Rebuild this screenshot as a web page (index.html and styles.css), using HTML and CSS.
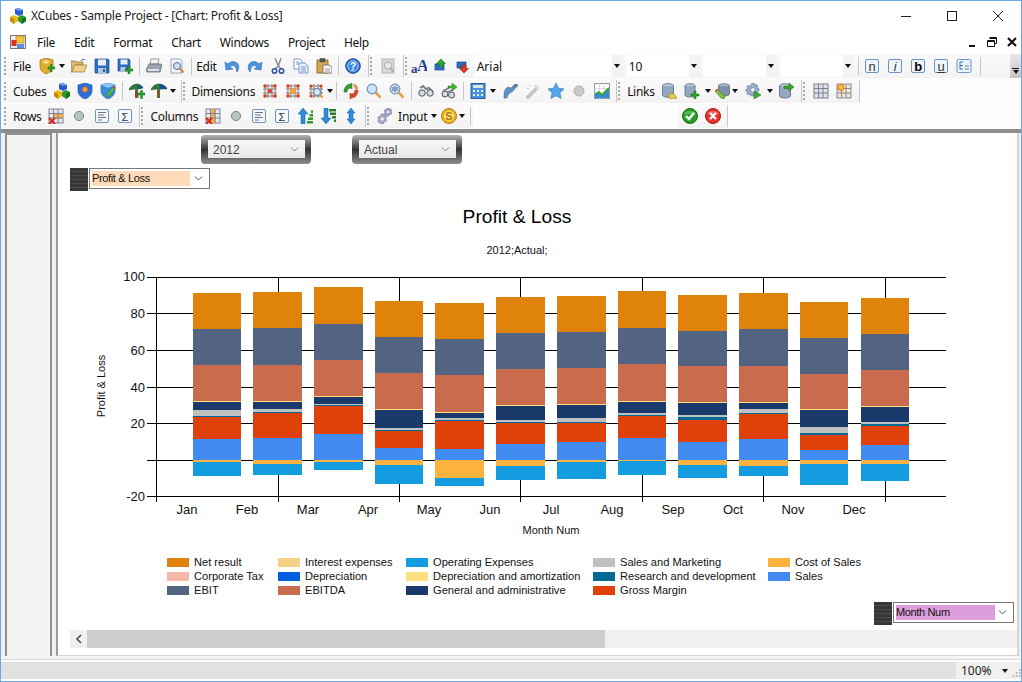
FILE: index.html
```html
<!DOCTYPE html>
<html lang="en">
<head>
<meta charset="utf-8">
<title>XCubes - Sample Project - [Chart: Profit &amp; Loss]</title>
<link rel="stylesheet" href="styles.css">
</head>
<body>
<svg class="defs" width="0" height="0" aria-hidden="true">
<defs>
<symbol id="i-cubes" viewBox="0 0 16 16"><path d="M5 1l4-1 4 2v4l-4 2-4-2z" fill="#2a5cc8"/><path d="M5 1l4 2 4-1-4-2z" fill="#6fa0f0"/><path d="M0 9l4-2 4 2v4l-4 3-4-3z" fill="#e8b818"/><path d="M4 11v5l-4-3V9z" fill="#c08a10"/><path d="M8 9l4-2 4 2v4l-4 3-4-3z" fill="#2f9a2a"/><path d="M12 11v5l4-3V9z" fill="#17701a"/></symbol>
<symbol id="i-doc" viewBox="0 0 16 16"><rect x=".5" y="1.5" width="15" height="13" fill="#eee" stroke="#777"/><rect x="6" y="2" width="8" height="7" fill="#f5c242" stroke="#b08820" stroke-width=".6"/><rect x="1.500" y="6" width="5" height="6" fill="#d9342b"/><rect x="7" y="10" width="7" height="4" fill="#5a8fe0"/></symbol>
<symbol id="i-new" viewBox="0 0 16 16"><path d="M1 2l6-2 7 2v6c0 4-4 7-7 8-3-1-6-4-6-8z" fill="#e0ad2e" stroke="#96701c" stroke-width=".7"/><path d="M3 4l4-2 4 2-4 2z" fill="#f7e08a"/><path d="M9 9h2.500V6.500H13V9h3v2h-3v3h-1.500v-3H9z" fill="#2da52d" stroke="#126612" stroke-width=".5"/></symbol>
<symbol id="i-open" viewBox="0 0 16 16"><path d="M0 3h5l1 1h6v3H4L1 14H0z" fill="#d9b870" stroke="#8f7336" stroke-width=".7"/><path d="M3.500 7H16l-3 7H1z" fill="#f2cf88" stroke="#8f7336" stroke-width=".7"/><path d="M10 3c1-2 3-2 4-1" fill="none" stroke="#4a76c0"/></symbol>
<symbol id="i-save" viewBox="0 0 16 16"><path d="M1 1h13l1 1v13H1z" fill="#2d6cc4" stroke="#1c4a90" stroke-width=".7"/><rect x="4" y="1.500" width="8" height="6" fill="#e6eef8"/><rect x="4" y="10" width="8" height="5" fill="#b8c8dc"/><rect x="9" y="11" width="2" height="3" fill="#2d5a9c"/></symbol>
<symbol id="i-saveas" viewBox="0 0 16 16"><path d="M1 1h11l1 1v11H1z" fill="#2d6cc4" stroke="#1c4a90" stroke-width=".7"/><rect x="3.500" y="1.500" width="7" height="5" fill="#e6eef8"/><rect x="3.500" y="9" width="5" height="4" fill="#b8c8dc"/><path d="M8 11h3V8h2v3h3v2h-3v3h-2v-3H8z" fill="#2da52d" stroke="#126612" stroke-width=".5"/></symbol>
<symbol id="i-print" viewBox="0 0 16 16"><path d="M5 1h8l-1 5H4z" fill="#f4f4f4" stroke="#777" stroke-width=".7"/><path d="M3 6h12l1 1-2 7H1L0 12z" fill="#9aa4ae" stroke="#59626c" stroke-width=".7"/><rect x="2" y="11" width="11" height="2" fill="#dfe3e7"/></symbol>
<symbol id="i-preview" viewBox="0 0 16 16"><path d="M2 1h9l2 2v12H2z" fill="#f4f7fb" stroke="#7d8fa6" stroke-width=".8"/><circle cx="8" cy="8" r="3.500" fill="#cfe2f6" stroke="#4a6a92"/><path d="M10.500 10.500l4 4" stroke="#d97a3a" stroke-width="2"/></symbol>
<symbol id="i-undo" viewBox="0 0 16 16"><path d="M1 4l1 8 7-1-3-2c2-2 5-2 6 1l1 4c3-4 2-9-2-10-3-1-5 0-7 2z" fill="#4b95e0" stroke="#2a67ad" stroke-width=".6"/></symbol>
<symbol id="i-redo" viewBox="0 0 16 16"><path d="M15 4l-1 8-7-1 3-2c-2-2-5-2-6 1l-1 4C0 10 1 5 5 4c3-1 5 0 7 2z" fill="#4b95e0" stroke="#2a67ad" stroke-width=".6"/></symbol>
<symbol id="i-cut" viewBox="0 0 16 16"><path d="M5 0l3.500 8L11 0M8 8l-2.500 3M8.500 8l2.500 3" fill="none" stroke="#8c929a" stroke-width="1.500"/><circle cx="4.500" cy="13" r="2.200" fill="none" stroke="#2a4f98" stroke-width="1.500"/><circle cx="11.500" cy="13" r="2.200" fill="none" stroke="#2a4f98" stroke-width="1.500"/></symbol>
<symbol id="i-copy" viewBox="0 0 16 16"><path d="M1 1h6l2 2v8H1z" fill="#fff" stroke="#5d87bd" stroke-width=".8"/><path d="M6 5h6l3 3v7H6z" fill="#e8f0fa" stroke="#5d87bd" stroke-width=".8"/><path d="M8 9h5M8 11h5M8 13h5M3 4h3M3 6h3" stroke="#5d87bd" stroke-width=".8"/></symbol>
<symbol id="i-paste" viewBox="0 0 16 16"><rect x="1" y="2" width="11" height="13" fill="#d7a850" stroke="#7c5c20" stroke-width=".8"/><rect x="4" y="0.500" width="5" height="3.500" fill="#555" stroke="#333" stroke-width=".4"/><path d="M7 7h6l3 2v6H7z" fill="#f5f5f5" stroke="#666" stroke-width=".8"/><path d="M9 11h5M9 13h5" stroke="#888" stroke-width=".8"/></symbol>
<symbol id="i-help" viewBox="0 0 16 16"><circle cx="8" cy="8" r="7.300" fill="#2f6fd0" stroke="#1f4c96"/><circle cx="8" cy="8" r="5.300" fill="#3f87e6" stroke="#dce9fb" stroke-width=".7"/><text x="8" y="12" text-anchor="middle" class="ico-txt-help">?</text></symbol>
<symbol id="i-grayprev" viewBox="0 0 16 16"><rect x="2" y="1" width="12" height="14" fill="#d8d8d8" stroke="#b8b8b8"/><circle cx="8" cy="7.500" r="3.500" fill="#e8e8e8" stroke="#aaa"/><path d="M10.500 10.500l3 3" stroke="#aaa" stroke-width="2"/></symbol>
<symbol id="i-font" viewBox="0 0 16 16"><text x="0" y="15" class="ico-txt-a">a</text><text x="6" y="13" class="ico-txt-A">A</text></symbol>
<symbol id="i-up" viewBox="0 0 16 16"><rect x="2" y="6" width="9" height="6" fill="#2f6cc8" stroke="#1b4688" stroke-width=".7"/><path d="M8 1l4.500 4.500H10V9H6V5.500H3.500z" fill="#2fa82f" stroke="#126e12" stroke-width=".6"/></symbol>
<symbol id="i-down" viewBox="0 0 16 16"><rect x="2" y="4" width="9" height="6" fill="#2f6cc8" stroke="#1b4688" stroke-width=".7"/><path d="M9 15l-4.500-4.500H7V7h4v3.500h2.500z" fill="#e03a20" stroke="#96200e" stroke-width=".6"/></symbol>
<symbol id="i-shield" viewBox="0 0 16 16"><path d="M1 2l7-2 7 2v6c0 4-4 7-7 8-3-1-7-4-7-8z" fill="#2a70d8" stroke="#1a4c9c" stroke-width=".6"/><circle cx="8" cy="6.500" r="2.800" fill="#f3a53a" stroke="#c9472a" stroke-width=".7"/></symbol>
<symbol id="i-shieldpen" viewBox="0 0 16 16"><path d="M1 2l7-2 7 2v6c0 4-4 7-7 8-3-1-7-4-7-8z" fill="#3c8cdc" stroke="#1f5ea4" stroke-width=".6"/><path d="M1 2l7 3 7-3-7-2z" fill="#8cc4f2"/><path d="M6 14l1-3 6-7 2 2-6 7z" fill="#5cb84a" stroke="#2b6e20" stroke-width=".5"/><path d="M13 4l2 2 1-1-2-2z" fill="#d6443a"/></symbol>
<symbol id="i-umbplus" viewBox="0 0 16 16"><path d="M0 7c1-4 5-6 8-6 2 0 5 1 6 4l-5 1-1 1-3-1z" fill="#2f7a3a" stroke="#134a20" stroke-width=".5"/><path d="M8 2c2 0 5 1 6 3l-5 1z" fill="#1c4e8a"/><path d="M6 7h3l.5 8H6z" fill="#7a5b2c"/><path d="M9 10h2.500V7.500h2V10H16v2h-2.500v3.500h-2V12H9z" fill="#2da52d" stroke="#126612" stroke-width=".5"/></symbol>
<symbol id="i-umb" viewBox="0 0 16 16"><path d="M0 7c1-4 5-6 8-6 3 0 7 2 8 5l-6 0-2 1-3-1z" fill="#2f7a3a" stroke="#134a20" stroke-width=".5"/><path d="M8 1c3 0 7 2 8 5l-7 0z" fill="#1c4e8a"/><path d="M6 7h3v8H6z" fill="#7a5b2c"/></symbol>
<symbol id="i-dim" viewBox="0 0 16 16"><path d="M3 3h10v10H3zM1 6h14M1 10h14M6 1v14M10 1v14" fill="none" stroke="#8a7a7a"/><g fill="#d83a20"><circle cx="3" cy="3" r="1.800"/><circle cx="13" cy="3" r="1.800"/><circle cx="3" cy="13" r="1.800"/><circle cx="13" cy="13" r="1.800"/><circle cx="8" cy="8" r="2"/></g></symbol>
<symbol id="i-dim2" viewBox="0 0 16 16"><path d="M3 3h10v10H3zM1 6h14M1 10h14M6 1v14M10 1v14" fill="none" stroke="#8a7a7a"/><g fill="#e0401c"><circle cx="3" cy="3" r="1.800"/><circle cx="13" cy="3" r="1.800"/><circle cx="8" cy="8" r="3" fill="#f0a030"/><circle cx="3" cy="13" r="1.800"/><circle cx="13" cy="13" r="1.800"/></g></symbol>
<symbol id="i-dim3" viewBox="0 0 16 16"><path d="M3 3h10v10H3zM1 6h14M1 10h14M6 1v14M10 1v14" fill="none" stroke="#8a7a7a"/><g fill="#d83a20"><circle cx="3" cy="3" r="1.600"/><circle cx="13" cy="3" r="1.600"/><circle cx="3" cy="13" r="1.600"/></g><circle cx="9" cy="9" r="3.500" fill="#d6e8fa" stroke="#5a7ea6"/><path d="M11.500 11.500l3 3" stroke="#e09040" stroke-width="2"/></symbol>
<symbol id="i-refresh" viewBox="0 0 16 16"><path d="M1 9C1 4 4 1 8 1l1-1v6L8 5C5 5 4 7 4 9z" fill="#35a035" stroke="#176017" stroke-width=".5"/><path d="M15 7c0 5-3 8-7 8l-1 1v-6l1 1c3 0 4-2 4-4z" fill="#dd4a2a" stroke="#8e2410" stroke-width=".5"/><path d="M10 1c3 0 5 2 5 5l-3 0z" fill="#e88a50"/></symbol>
<symbol id="i-find" viewBox="0 0 16 16"><circle cx="6" cy="6" r="4.800" fill="#cfe4fa" stroke="#6f90b8" stroke-width="1.200"/><path d="M9.500 9.500l5 5" stroke="#e0a04c" stroke-width="2.600"/></symbol>
<symbol id="i-find2" viewBox="0 0 16 16"><circle cx="6" cy="6" r="4.800" fill="#cfe4fa" stroke="#6f90b8" stroke-width="1.200"/><path d="M4 4v4M6 3v6M8 4v4" stroke="#4a5e78" stroke-width="1"/><path d="M9.500 9.500l5 5" stroke="#e0a04c" stroke-width="2.600"/></symbol>
<symbol id="i-binoc" viewBox="0 0 16 16"><path d="M2 5l3-2 3 3 3-1 4 4" fill="none" stroke="#7b8088" stroke-width="2"/><circle cx="4" cy="10" r="3.200" fill="#d6dbe0" stroke="#50555c"/><circle cx="12" cy="10" r="3.200" fill="#d6dbe0" stroke="#50555c"/></symbol>
<symbol id="i-binoc2" viewBox="0 0 16 16"><circle cx="4" cy="11" r="3" fill="#d6dbe0" stroke="#50555c"/><circle cx="10.500" cy="12" r="3" fill="#d6dbe0" stroke="#50555c"/><path d="M2 8l6-3M7 9l5-2" stroke="#7b8088" stroke-width="1.800"/><path d="M7 3h4V0l5 4-5 4V5H7z" fill="#46b030" stroke="#1c7010" stroke-width=".5"/></symbol>
<symbol id="i-calc" viewBox="0 0 16 16"><rect x="1" y="0.500" width="14" height="15" fill="#4a90dc" stroke="#28609e"/><rect x="3" y="2" width="10" height="3" fill="#d7ecd8"/><g fill="#e8f2fc"><rect x="3" y="7" width="2" height="2"/><rect x="7" y="7" width="2" height="2"/><rect x="11" y="7" width="2" height="2"/><rect x="3" y="11" width="2" height="2"/><rect x="7" y="11" width="2" height="2"/><rect x="11" y="11" width="2" height="2"/></g></symbol>
<symbol id="i-wrench" viewBox="0 0 16 16"><path d="M2 15c0-5 0-9 4-11l3 1 4-4 3 1-5 6c-2 2-5 2-6 7z" fill="#5c8fc8" stroke="#36608e" stroke-width=".5"/><path d="M12 2l3-1 1 2-3 2z" fill="#70767e"/></symbol>
<symbol id="i-wand" viewBox="0 0 16 16"><path d="M1 14L10 5l2 2-9 9z" fill="#c9c9c9" stroke="#a2a2a2" stroke-width=".6"/><path d="M11 1l1 2 2 0-1 2 1 2-2 0-1-2-2-1z" fill="#dadada"/><path d="M4 2l1 1M2 5l2 1" stroke="#c0c0c0"/></symbol>
<symbol id="i-star" viewBox="0 0 16 16"><path d="M8 0l2.400 5.200 5.600.7-4.100 3.900 1.100 5.700L8 12.700l-5 2.800 1.100-5.700L0 5.900l5.600-.7z" fill="#55a5ea" stroke="#2a6cb0" stroke-width=".6"/></symbol>
<symbol id="i-dot" viewBox="0 0 16 16"><circle cx="8" cy="8" r="5" fill="#c9c9c9" stroke="#b0b0b0"/></symbol>
<symbol id="i-dotg" viewBox="0 0 16 16"><circle cx="8" cy="8" r="4.600" fill="#b9c4c2" stroke="#7a8a88"/></symbol>
<symbol id="i-chart" viewBox="0 0 16 16"><rect x=".5" y=".5" width="15" height="15" fill="#fff" stroke="#8a96a4"/><path d="M0 5.500h16M0 10.500h16M5.500 0v16M10.500 0v16" stroke="#c4ccd4" stroke-width=".7"/><path d="M1 15V11l4-2 3 3 7-7v10z" fill="#3d88d8"/><path d="M1 11l4-2 3 3 7-7" fill="none" stroke="#2ea82e" stroke-width="1.800"/></symbol>
<symbol id="i-dbs" viewBox="0 0 16 16"><ellipse cx="7" cy="3" rx="5.500" ry="2.300" fill="#c4d0e0" stroke="#6a7c92"/><path d="M1.500 3v9c0 1 2.500 2.300 5.500 2.300s5.500-1.300 5.500-2.300V3" fill="#96a8c0" stroke="#6a7c92"/><path d="M7 13l3-3 3 1 3 4-2 1H9z" fill="#e8c84a" stroke="#8f7a20" stroke-width=".6"/></symbol>
<symbol id="i-dbplus" viewBox="0 0 16 16"><ellipse cx="6" cy="3" rx="5" ry="2.200" fill="#c4d0e0" stroke="#6a7c92"/><path d="M1 3v9c0 1 2.300 2 5 2s5-1 5-2V3" fill="#96a8c0" stroke="#6a7c92"/><path d="M7 11h3V8h2v3h3v2h-3v3h-2v-3H7z" fill="#2da52d" stroke="#126612" stroke-width=".5"/></symbol>
<symbol id="i-dbpen" viewBox="0 0 16 16"><ellipse cx="10" cy="3" rx="5.500" ry="2.200" fill="#b4bed0" stroke="#6a7c92"/><path d="M4.500 3v8c0 1 2.500 2 5.500 2s5.500-1 5.500-2V3" fill="#7f90a8" stroke="#6a7c92"/><path d="M1 8l2-2 8 7-1 3-3-1z" fill="#7ec040" stroke="#3e7a14" stroke-width=".6"/><path d="M1 8l2-2 1 1-2 2z" fill="#e04a3a"/></symbol>
<symbol id="i-gear" viewBox="0 0 16 16"><path d="M7 0h2l.5 2 2-.5 1.500 1.500-1 1.800 2 1v2l-2 .7.5 2-1.500 1.500-2-1-.8 2H6l-.7-2-2 1-1.500-1.500 1-2-2-.5V6.500l2-.7-1-2L3.300 2.300l2 1z" fill="#9cb0cc" stroke="#5e7290" stroke-width=".6"/><circle cx="8" cy="7" r="2.500" fill="#e4eaf2" stroke="#5e7290" stroke-width=".6"/><path d="M9 8l7 4-7 4z" fill="#3aa83a" stroke="#1a6a1a" stroke-width=".5"/></symbol>
<symbol id="i-dbout" viewBox="0 0 16 16"><ellipse cx="7" cy="3" rx="5.500" ry="2.200" fill="#c4d0e0" stroke="#6a7c92"/><path d="M1.500 3v10c0 1 2.500 2 5.500 2s5.500-1 5.500-2V3" fill="#96a8c0" stroke="#6a7c92"/><path d="M6 3h5V0l5 4-5 4V5.500H6z" fill="#35a82a" stroke="#1a6a12" stroke-width=".5"/></symbol>
<symbol id="i-grid" viewBox="0 0 16 16"><rect x="1" y="1" width="14" height="14" fill="#dfe1ea" stroke="#7d8090"/><path d="M1 5.500h14M1 10h14M5.500 1v14M10 1v14" stroke="#7d8090"/></symbol>
<symbol id="i-gridsun" viewBox="0 0 16 16"><rect x="1" y="1" width="14" height="14" fill="#f3e4cc" stroke="#8a8a94"/><path d="M1 5.500h14M1 10h14M5.500 1v14M10 1v14" stroke="#8a8a94"/><circle cx="5" cy="4.500" r="3" fill="#f6c32c" stroke="#e2572a" stroke-width=".8"/></symbol>
<symbol id="i-gridx" viewBox="0 0 16 16"><rect x="1" y="1" width="14" height="14" fill="#e8e8ef" stroke="#7d8090"/><rect x="6" y="6" width="9" height="5" fill="#f2b050"/><path d="M1 5.500h14M1 10h14M5.500 1v14M10 1v14" stroke="#7d8090"/><path d="M1 10l6 6M7 10l-6 6" stroke="#d82a18" stroke-width="2"/></symbol>
<symbol id="i-gridx2" viewBox="0 0 16 16"><rect x="1" y="1" width="14" height="14" fill="#e8e8ef" stroke="#7d8090"/><rect x="6" y="1" width="4.500" height="14" fill="#f2b050"/><path d="M1 5.500h14M1 10h14M5.500 1v14M10 1v14" stroke="#7d8090"/><path d="M1 10l6 6M7 10l-6 6" stroke="#d82a18" stroke-width="2"/></symbol>
<symbol id="i-list" viewBox="0 0 16 16"><rect x="1.500" y="1.500" width="13" height="13" rx="1.500" fill="#f5f9fe" stroke="#6f93c4"/><path d="M4 4.500h8M4 7h6M4 9.500h8M4 12h4" stroke="#6a7484"/></symbol>
<symbol id="i-sigma" viewBox="0 0 16 16"><rect x="1.500" y="1.500" width="13" height="13" rx="1.500" fill="#f5f9fe" stroke="#6f93c4"/><text x="8" y="12.500" text-anchor="middle" class="ico-txt-s">Σ</text></symbol>
<symbol id="i-sortup" viewBox="0 0 16 16"><path d="M6 0l5 6H8v10H4V6H1z" fill="#2d8cdc" stroke="#1a5a9c" stroke-width=".5"/><g fill="#2f9a2a"><rect x="10" y="13" width="6" height="2.500"/><rect x="11" y="9.500" width="5" height="2.500"/><rect x="12.500" y="6" width="3.500" height="2.500"/><rect x="14" y="2.500" width="2" height="2.500"/></g></symbol>
<symbol id="i-sortdown" viewBox="0 0 16 16"><path d="M6 16l5-6H8V0H4v10H1z" fill="#2d8cdc" stroke="#1a5a9c" stroke-width=".5"/><g fill="#2f7a2a"><rect x="9" y="1" width="7" height="2.500"/><rect x="10" y="4.500" width="6" height="2.500"/><rect x="12" y="8" width="4" height="2.500"/><rect x="14" y="11.500" width="2" height="2.500"/></g></symbol>
<symbol id="i-updown" viewBox="0 0 16 16"><path d="M8 0l4 5H10v6h2l-4 5-4-5h2V5H4z" fill="#2d8cdc" stroke="#1a5a9c" stroke-width=".5"/></symbol>
<symbol id="i-gears" viewBox="0 0 16 16"><g fill="#a8a4c4" stroke="#6a6690" stroke-width=".5"><path d="M10 0h2l.4 1.500 1.600-.5 1 1.500-1 1.200 1 1.300-1 1.500-1.600-.5L12 8h-2l-.4-1.500L8 7 7 5.500 8 4.200 7 3l1-1.500 1.600.5z"/><path d="M4 6h2.500l.4 1.700 1.700-.5 1.200 2-1.300 1.300 1.300 1.300-1.200 2-1.700-.5L6.500 16H4l-.4-1.700-1.700.5-1.200-2L2 11.500.700 10.200l1.200-2 1.700.5z"/></g><circle cx="11" cy="4" r="1.300" fill="#eee"/><circle cx="5.200" cy="11" r="1.800" fill="#eee"/></symbol>
<symbol id="i-coin" viewBox="0 0 16 16"><circle cx="8" cy="8" r="7.500" fill="#efb41e" stroke="#b07c08"/><circle cx="8" cy="8" r="5" fill="#fbe07a"/><text x="8" y="12" text-anchor="middle" class="ico-txt-c">S</text></symbol>
<symbol id="i-ok" viewBox="0 0 16 16"><circle cx="8" cy="8" r="7.500" fill="#27a027" stroke="#126c12"/><path d="M2 6c2-4 10-4 12 0" fill="#7cd07c" opacity=".6"/><path d="M4 8l3 3 5-6" fill="none" stroke="#fff" stroke-width="2.400"/></symbol>
<symbol id="i-no" viewBox="0 0 16 16"><circle cx="8" cy="8" r="7.500" fill="#e8352a" stroke="#a81810"/><path d="M2 6c2-4 10-4 12 0" fill="#f59088" opacity=".6"/><path d="M5 5l6 6M11 5l-6 6" stroke="#fff" stroke-width="2.400"/></symbol>
<symbol id="i-tree" viewBox="0 0 16 16"><rect x="1" y="1.500" width="14" height="13" rx="1.500" fill="#eaf2fc" stroke="#6f93c4"/><path d="M4 4h3M4 4v7h3M4 7.500h3" fill="none" stroke="#2a7ac8"/><path d="M9 8h4M9 11h4" stroke="#6a7484"/></symbol>
</defs>
</svg>

<div class="window">
  <header class="titlebar">
    <svg class="ico app-ico"><use href="#i-cubes"/></svg>
    <span class="title-text">XCubes - Sample Project - [Chart: Profit &amp; Loss]</span>
    <span class="caps">
      <svg class="cap" viewBox="0 0 46 30"><path d="M18 15.500h10" stroke="#222" fill="none"/></svg>
      <svg class="cap" viewBox="0 0 46 30"><rect x="18.500" y="10.500" width="9" height="9" stroke="#222" fill="none"/></svg>
      <svg class="cap" viewBox="0 0 46 30"><path d="M18 10l10 10M28 10L18 20" stroke="#222" fill="none"/></svg>
    </span>
  </header>

  <nav class="menubar">
    <svg class="ico menu-ico"><use href="#i-doc"/></svg>
    <span class="menu m-first">File</span>
    <span class="menu">Edit</span>
    <span class="menu">Format</span>
    <span class="menu">Chart</span>
    <span class="menu">Windows</span>
    <span class="menu">Project</span>
    <span class="menu">Help</span>
    <span class="mdi">
      <svg class="mdi-ic" viewBox="0 0 12 12"><rect x="3" y="9" width="6" height="2" fill="#111"/></svg>
      <svg class="mdi-ic" viewBox="0 0 12 12"><path d="M3.500 1.500h7v6h-2M1.500 4.500h7v6h-7zM1.500 5.500h7M3.500 2.500h7" fill="none" stroke="#111"/></svg>
      <svg class="mdi-ic" viewBox="0 0 12 12"><path d="M2 2l8 8M10 2l-8 8" stroke="#111" stroke-width="2.200"/></svg>
    </span>
  </nav>

  <div class="tbrow">
    <div class="band">
      <i class="grip"></i><span class="lbl l-pad4">File</span>
      <b class="btn"><svg class="ico"><use href="#i-new"/></svg></b><i class="arr"></i>
      <b class="btn"><svg class="ico"><use href="#i-open"/></svg></b>
      <b class="btn"><svg class="ico"><use href="#i-save"/></svg></b>
      <b class="btn"><svg class="ico"><use href="#i-saveas"/></svg></b><i class="sep"></i>
      <b class="btn"><svg class="ico"><use href="#i-print"/></svg></b>
      <b class="btn"><svg class="ico"><use href="#i-preview"/></svg></b><i class="sep"></i>
      <span class="lbl l-pad4">Edit</span>
      <b class="btn"><svg class="ico"><use href="#i-undo"/></svg></b>
      <b class="btn"><svg class="ico"><use href="#i-redo"/></svg></b>
      <b class="btn"><svg class="ico"><use href="#i-cut"/></svg></b>
      <b class="btn"><svg class="ico"><use href="#i-copy"/></svg></b>
      <b class="btn"><svg class="ico"><use href="#i-paste"/></svg></b><i class="sep"></i>
      <b class="btn"><svg class="ico"><use href="#i-help"/></svg></b>
      <i class="bandend"></i>
    </div>
    <div class="band">
      <i class="grip"></i><b class="btn"><svg class="ico"><use href="#i-grayprev"/></svg></b>
      <i class="bandend"></i>
    </div>
    <div class="band band-fill">
      <i class="grip grip-tight"></i>
      <b class="btn btn-22"><svg class="ico"><use href="#i-font"/></svg></b>
      <b class="btn btn-22"><svg class="ico"><use href="#i-up"/></svg></b>
      <b class="btn btn-22"><svg class="ico"><use href="#i-down"/></svg></b>
      <span class="combo c-font"><span class="combo-text">Arial</span></span><span class="combo-arr"><i class="tri"></i></span>
      <span class="combo c-size"><span class="combo-text">10</span></span><span class="combo-arr"><i class="tri"></i></span>
      <span class="combo c-blank"></span><span class="combo-arr"><i class="tri"></i></span>
      <span class="combo c-blank"></span><span class="combo-arr"><i class="tri"></i></span>
      <i class="sep sep-font"></i>
      <b class="fmt"><span class="fmt-n">n</span></b>
      <b class="fmt"><span class="fmt-i">i</span></b>
      <b class="fmt"><span class="fmt-b">b</span></b>
      <b class="fmt"><span class="fmt-u">u</span></b>
      <b class="fmt fmt-ic"><svg class="ico"><use href="#i-tree"/></svg></b>
      <i class="sep sep-end"></i>
    </div>
    <div class="overflow"><i class="ovf-bar"></i><i class="tri"></i></div>
  </div>

  <div class="tbrow">
    <div class="band">
      <i class="grip"></i><span class="lbl l-pad4">Cubes</span>
      <b class="btn"><svg class="ico"><use href="#i-cubes"/></svg></b>
      <b class="btn"><svg class="ico"><use href="#i-shield"/></svg></b>
      <b class="btn"><svg class="ico"><use href="#i-shieldpen"/></svg></b><i class="sep"></i>
      <b class="btn"><svg class="ico"><use href="#i-umbplus"/></svg></b>
      <b class="btn btn-20"><svg class="ico"><use href="#i-umb"/></svg></b><i class="arr"></i>
      <i class="bandend"></i>
    </div>
    <div class="band">
      <i class="grip"></i><span class="lbl">Dimensions</span>
      <b class="btn"><svg class="ico"><use href="#i-dim"/></svg></b>
      <b class="btn"><svg class="ico"><use href="#i-dim2"/></svg></b>
      <b class="btn"><svg class="ico"><use href="#i-dim3"/></svg></b><i class="arr arr-tight"></i><i class="sep"></i>
      <b class="btn"><svg class="ico"><use href="#i-refresh"/></svg></b>
      <b class="btn"><svg class="ico"><use href="#i-find"/></svg></b>
      <b class="btn"><svg class="ico"><use href="#i-find2"/></svg></b><i class="sep"></i>
      <b class="btn"><svg class="ico"><use href="#i-binoc"/></svg></b>
      <b class="btn"><svg class="ico"><use href="#i-binoc2"/></svg></b><i class="sep"></i>
      <b class="btn"><svg class="ico"><use href="#i-calc"/></svg></b><i class="arr"></i>
      <b class="btn"><svg class="ico"><use href="#i-wrench"/></svg></b>
      <b class="btn"><svg class="ico"><use href="#i-wand"/></svg></b>
      <b class="btn"><svg class="ico"><use href="#i-star"/></svg></b>
      <b class="btn"><svg class="ico"><use href="#i-dot"/></svg></b>
      <b class="btn"><svg class="ico"><use href="#i-chart"/></svg></b>
      <i class="bandend"></i>
    </div>
    <div class="band">
      <i class="grip"></i><span class="lbl">Links</span>
      <b class="btn"><svg class="ico"><use href="#i-dbs"/></svg></b>
      <b class="btn"><svg class="ico"><use href="#i-dbplus"/></svg></b><i class="arr"></i>
      <b class="btn btn-18"><svg class="ico"><use href="#i-dbpen"/></svg></b><i class="arr"></i>
      <b class="btn btn-26"><svg class="ico"><use href="#i-gear"/></svg></b><i class="arr"></i>
      <b class="btn"><svg class="ico"><use href="#i-dbout"/></svg></b>
      <i class="bandend"></i>
    </div>
    <div class="band">
      <i class="grip"></i>
      <b class="btn"><svg class="ico"><use href="#i-grid"/></svg></b>
      <b class="btn"><svg class="ico"><use href="#i-gridsun"/></svg></b>
      <i class="bandend"></i>
    </div>
  </div>

  <div class="tbrow">
    <div class="band">
      <i class="grip"></i><span class="lbl">Rows</span>
      <b class="btn"><svg class="ico"><use href="#i-gridx"/></svg></b>
      <b class="btn"><svg class="ico"><use href="#i-dotg"/></svg></b>
      <b class="btn"><svg class="ico"><use href="#i-list"/></svg></b>
      <b class="btn"><svg class="ico"><use href="#i-sigma"/></svg></b>
      <i class="bandend"></i>
    </div>
    <div class="band">
      <i class="grip"></i><span class="lbl">Columns</span>
      <b class="btn"><svg class="ico"><use href="#i-gridx2"/></svg></b>
      <b class="btn"><svg class="ico"><use href="#i-dotg"/></svg></b>
      <b class="btn"><svg class="ico"><use href="#i-list"/></svg></b>
      <b class="btn"><svg class="ico"><use href="#i-sigma"/></svg></b>
      <b class="btn"><svg class="ico"><use href="#i-sortup"/></svg></b>
      <b class="btn"><svg class="ico"><use href="#i-sortdown"/></svg></b>
      <b class="btn"><svg class="ico"><use href="#i-updown"/></svg></b>
      <i class="bandend"></i>
    </div>
    <div class="band">
      <i class="grip"></i>
      <b class="btn btn-22"><svg class="ico"><use href="#i-gears"/></svg></b>
      <span class="lbl">Input</span><i class="arr"></i>
      <b class="btn btn-19"><svg class="ico"><use href="#i-coin"/></svg></b><i class="arr"></i>
      <i class="sep"></i>
    </div>
    <div class="band band-plain"></div>
    <div class="band">
      <b class="btn"><svg class="ico"><use href="#i-ok"/></svg></b>
      <b class="btn"><svg class="ico"><use href="#i-no"/></svg></b>
      <i class="bandend"></i>
    </div>
  </div>

  <div class="workspace">
    <aside class="sidepanel"></aside>
    <main class="chartpane">
      <div class="filters">
        <div class="pill"><div class="pill-in"><span>2012</span><svg class="chev" viewBox="0 0 9 5"><path d="M1 .5l3.500 3.500L8 .5" fill="none" stroke="#888"/></svg></div></div>
        <div class="pill"><div class="pill-in"><span>Actual</span><svg class="chev" viewBox="0 0 9 5"><path d="M1 .5l3.500 3.500L8 .5" fill="none" stroke="#888"/></svg></div></div>
      </div>
      <div class="axis-select axis-rows">
        <i class="handle"></i>
        <div class="select"><span class="sel-text sel-peach">Profit &amp; Loss</span><svg class="chev chev-dark" viewBox="0 0 9 5"><path d="M1 .5l3.500 3.500L8 .5" fill="none" stroke="#555"/></svg></div>
      </div>

      <svg class="plot" viewBox="58 200 959 345" width="959" height="345">
        <text x="517" y="223" text-anchor="middle" class="t-title">Profit &amp; Loss</text>
        <text x="517" y="254" text-anchor="middle" class="t-sub">2012;Actual;</text>
        <path class="grid" d="M147 277.500H946M147 313.500H946M147 350.500H946M147 387.500H946M147 423.500H946M147 460.500H946M147 496.500H946M156.500 277V502M278.500 277V502M399.500 277V502M520.500 277V502M642.500 277V502M763.500 277V502M885.500 277V502"/>
        <path class="s-net" d="M193 293H241V329H193ZM253 292H302V328H253ZM314 287H363V324H314ZM375 301H423V337H375ZM435 303H484V339H435ZM496 297H545V333H496ZM557 296H606V332H557ZM618 291H666V328H618ZM678 295H727V331H678ZM739 293H788V329H739ZM800 302H848V338H800ZM861 298H909V334H861Z"/>
        <path class="s-ebit" d="M193 329H241V365H193ZM253 328H302V365H253ZM314 324H363V360H314ZM375 337H423V373H375ZM435 339H484V375H435ZM496 333H545V369H496ZM557 332H606V368H557ZM618 328H666V364H618ZM678 331H727V366H678ZM739 329H788V366H739ZM800 338H848V374H800ZM861 334H909V370H861Z"/>
        <path class="s-ebitda" d="M193 365H241V401H193ZM253 365H302V401H253ZM314 360H363V396H314ZM375 373H423V409H375ZM435 375H484V412H435ZM496 369H545V405H496ZM557 368H606V404H557ZM618 364H666V401H618ZM678 366H727V402H678ZM739 366H788V402H739ZM800 374H848V409H800ZM861 370H909V406H861Z"/>
        <path class="s-cream" d="M193 401H241V402H193ZM253 401H302V402H253ZM314 396H363V397H314ZM375 409H423V410H375ZM435 412H484V413H435ZM496 405H545V406H496ZM557 404H606V405H557ZM618 401H666V402H618ZM678 402H727V403H678ZM739 402H788V403H739ZM800 409H848V410H800ZM861 406H909V407H861Z"/>
        <path class="s-navy" d="M193 402H241V410H193ZM253 402H302V409H253ZM314 397H363V404H314ZM375 410H423V428H375ZM435 413H484V418H435ZM496 406H545V420H496ZM557 405H606V418H557ZM618 402H666V413H618ZM678 403H727V415H678ZM739 403H788V409H739ZM800 410H848V427H800ZM861 407H909V422H861Z"/>
        <path class="s-gray" d="M193 410H241V416H193ZM253 409H302V412H253ZM314 404H363V405H314ZM375 428H423V430H375ZM435 418H484V420H435ZM496 420H545V422H496ZM557 418H606V422H557ZM618 413H666V415H618ZM678 415H727V417H678ZM739 409H788V413H739ZM800 427H848V433H800ZM861 422H909V424H861Z"/>
        <path class="s-teal" d="M193 416H241V417H193ZM253 412H302V413H253ZM314 405H363V406H314ZM375 430H423V431H375ZM435 420H484V421H435ZM496 422H545V423H496ZM557 422H606V423H557ZM618 415H666V416H618ZM678 417H727V420H678ZM739 413H788V414H739ZM800 433H848V435H800ZM861 424H909V426H861Z"/>
        <path class="s-red" d="M193 417H241V439H193ZM253 413H302V438H253ZM314 406H363V434H314ZM375 431H423V448H375ZM435 421H484V449H435ZM496 423H545V444H496ZM557 423H606V442H557ZM618 416H666V438H618ZM678 420H727V442H678ZM739 414H788V439H739ZM800 435H848V450H800ZM861 426H909V445H861Z"/>
        <path class="s-blue" d="M193 439H241V460H193ZM253 438H302V460H253ZM314 434H363V460H314ZM375 448H423V460H375ZM435 449H484V460H435ZM496 444H545V460H496ZM557 442H606V460H557ZM618 438H666V460H618ZM678 442H727V460H678ZM739 439H788V460H739ZM800 450H848V460H800ZM861 445H909V460H861Z"/>
        <path class="s-amber" d="M193 460H241V462H193ZM253 460H302V464H253ZM314 460H363V462H314ZM375 460H423V465H375ZM435 460H484V478H435ZM496 460H545V466H496ZM557 460H606V462H557ZM618 460H666V461H618ZM678 460H727V465H678ZM739 460H788V466H739ZM800 460H848V464H800ZM861 460H909V464H861Z"/>
        <path class="s-opex" d="M193 462H241V476H193ZM253 464H302V475H253ZM314 462H363V470H314ZM375 465H423V484H375ZM435 478H484V486H435ZM496 466H545V480H496ZM557 462H606V479H557ZM618 461H666V475H618ZM678 465H727V478H678ZM739 466H788V476H739ZM800 464H848V485H800ZM861 464H909V481H861Z"/>
        <g class="t-axis" text-anchor="end">
          <text x="145" y="281">100</text><text x="145" y="318">80</text><text x="145" y="355">60</text><text x="145" y="392">40</text><text x="145" y="428">20</text><text x="145" y="501">-20</text>
        </g>
        <g class="t-axis" text-anchor="middle">
          <text x="187" y="514">Jan</text><text x="247" y="514">Feb</text><text x="308" y="514">Mar</text><text x="368" y="514">Apr</text><text x="429" y="514">May</text><text x="490" y="514">Jun</text><text x="551" y="514">Jul</text><text x="612" y="514">Aug</text><text x="673" y="514">Sep</text><text x="733" y="514">Oct</text><text x="793" y="514">Nov</text><text x="854" y="514">Dec</text>
        </g>
        <text x="551" y="534" text-anchor="middle" class="t-sub">Month Num</text>
        <text x="0" y="0" text-anchor="middle" class="t-sub" transform="translate(105 386) rotate(-90)">Profit &amp; Loss</text>
      </svg>

      <div class="legend">
        <div class="leg-col col-1">
          <span class="leg"><i class="sw s1"></i>Net result</span>
          <span class="leg"><i class="sw s2"></i>Corporate Tax</span>
          <span class="leg"><i class="sw s3"></i>EBIT</span>
        </div>
        <div class="leg-col col-2">
          <span class="leg"><i class="sw s4"></i>Interest expenses</span>
          <span class="leg"><i class="sw s5"></i>Depreciation</span>
          <span class="leg"><i class="sw s6"></i>EBITDA</span>
        </div>
        <div class="leg-col col-3">
          <span class="leg"><i class="sw s7"></i>Operating Expenses</span>
          <span class="leg"><i class="sw s8"></i>Depreciation and amortization</span>
          <span class="leg"><i class="sw s9"></i>General and administrative</span>
        </div>
        <div class="leg-col col-4">
          <span class="leg"><i class="sw s10"></i>Sales and Marketing</span>
          <span class="leg"><i class="sw s11"></i>Research and development</span>
          <span class="leg"><i class="sw s12"></i>Gross Margin</span>
        </div>
        <div class="leg-col col-5">
          <span class="leg"><i class="sw s13"></i>Cost of Sales</span>
          <span class="leg"><i class="sw s14"></i>Sales</span>
        </div>
      </div>

      <div class="axis-select axis-cols">
        <i class="handle"></i>
        <div class="select"><span class="sel-text sel-pink">Month Num</span><svg class="chev chev-dark" viewBox="0 0 9 5"><path d="M1 .5l3.500 3.500L8 .5" fill="none" stroke="#555"/></svg></div>
      </div>

      <div class="hscroll">
        <span class="hs-btn"><svg class="hs-arrow" viewBox="0 0 6 10"><path d="M5 1L1 5l4 4" fill="none" stroke="#444" stroke-width="1.500"/></svg></span>
        <span class="hs-thumb"></span>
      </div>
    </main>
  </div>

  <footer class="statusbar">
    <span class="zoom">100%<i class="tri"></i><svg class="sizegrip" viewBox="0 0 12 12"><g fill="#a8a8a8"><rect x="9" y="1" width="2" height="2"/><rect x="5" y="5" width="2" height="2"/><rect x="9" y="5" width="2" height="2"/><rect x="1" y="9" width="2" height="2"/><rect x="5" y="9" width="2" height="2"/><rect x="9" y="9" width="2" height="2"/></g></svg></span>
  </footer>
</div>
</body>
</html>
```

FILE: styles.css
```css
* { box-sizing: border-box; }
html, body { margin: 0; padding: 0; background: #fff; }
.defs { position: absolute; }
i, b { font-style: normal; font-weight: normal; }

.window {
  width: 1022px; height: 682px;
  border: 1px solid #6aa9e6;
  display: flex; flex-direction: column;
  background: #fff;
  font-family: "Noto Sans", "Open Sans", sans-serif;
  font-size: 12px; color: #111;
  overflow: hidden;
}

/* title bar */
.titlebar { height: 29px; display: flex; align-items: center; padding-left: 9px; flex: none; }
.ico { width: 16px; height: 16px; display: block; flex: none; }
.title-text { margin-left: 5px; color: #222; letter-spacing: -.22px; }
.caps { margin-left: auto; display: flex; }
.cap { width: 46px; height: 30px; display: block; }

/* menu bar */
.menubar { height: 24px; display: flex; align-items: center; padding-left: 9px; flex: none; letter-spacing: -.3px; gap: 19px; }
.menu-ico { margin-right: -8px; }
.mdi { margin-left: auto; display: flex; gap: 8px; margin-right: 3px; }
.mdi-ic { width: 12px; height: 12px; display: block; }

/* toolbars */
.tbrow { height: 25px; display: flex; flex: none; padding-left: 2px; background: #fdfdfd; }
.band { display: flex; align-items: center; background: linear-gradient(#fafafa, #f3f3f3); height: 24px; }
.band-fill { flex: 1; }
.band-plain { background: #fdfdfd; width: 205px; }
.grip { width: 8px; height: 18px; flex: none; background: radial-gradient(circle at 1px 1px, #a8a8a8 1px, transparent 1px) 1px 0 / 2px 4px repeat-y; }
.grip-tight { width: 4px; }
.lbl { padding: 0 3px 0 2px; white-space: nowrap; letter-spacing: -.3px; }
.l-pad4 { padding-right: 4.2px; }
.btn { width: 23px; height: 22px; display: flex; align-items: center; justify-content: center; flex: none; }
.btn-26 { width: 26px; }
.btn-22 { width: 22px; }
.btn-20 { width: 20px; }
.btn-19 { width: 19px; }
.btn-18 { width: 18px; }
.arr { width: 9px; height: 22px; flex: none; position: relative; }
.arr-tight { width: 6px; }
.arr::after, .tri { content: ""; display: block; width: 0; height: 0; border-left: 3.5px solid transparent; border-right: 3.5px solid transparent; border-top: 4px solid #111; }
.arr::after { position: absolute; left: 1px; top: 9px; }
.arr-tight::after { left: 0; }
.sep { width: 6px; height: 18px; flex: none; background: linear-gradient(#c8c8c8, #c8c8c8) center / 1px 100% no-repeat; }
.sep-font { width: 4px; }
.sep-end { margin-left: 2px; }
.bandend { width: 4px; height: 22px; flex: none; background: linear-gradient(#c8c8c8, #c8c8c8) right / 1px 100% no-repeat; }

.combo { height: 22px; background: #fff; display: flex; align-items: center; font-size: 12px; }
.combo-text { padding-left: 3px; }
.c-font { width: 138px; }
.c-size { width: 63px; }
.c-blank { width: 63px; }
.combo-arr { width: 11px; height: 22px; margin-right: 3px; display: flex; align-items: center; justify-content: center; background: #f3f3f3; }
.fmt { width: 23px; height: 22px; display: flex; align-items: center; justify-content: center; flex: none; }
.fmt span { width: 14px; height: 14px; border: 1px solid #6f93c4; border-radius: 2px; background: #f0f5fc; display: flex; align-items: center; justify-content: center; font: 13px/1 "Liberation Sans", sans-serif; color: #333; }
.fmt .fmt-i { font-style: italic; }
.fmt .fmt-b { font-weight: bold; color: #000; }
.fmt .fmt-u { text-decoration: underline; }
.overflow { width: 11px; height: 24px; background: linear-gradient(#e8e8e8, #c4c4c4); display: flex; flex-direction: column; align-items: center; justify-content: flex-end; padding-bottom: 4px; gap: 1px; flex: none; }
.ovf-bar { width: 7px; height: 1px; background: #111; }

.ico-txt-help { font: bold 10px "Liberation Sans", sans-serif; fill: #fff; }
.ico-txt-a { font: bold 13px "Liberation Serif", serif; fill: #1c4390; }
.ico-txt-A { font: bold 16px "Liberation Serif", serif; fill: #1c4390; }
.ico-txt-s { font: 11px "Liberation Sans", sans-serif; fill: #333; }
.ico-txt-c { font: bold 11px "Liberation Sans", sans-serif; fill: #b07c08; }

/* workspace */
.workspace { flex: 1; min-height: 0; display: flex; background: #f0f0f0; border-top: 4px solid #8c8c8c; }
.sidepanel { width: 47px; margin-left: 4px; background: #f4f4f4; border: 2px solid #8d9296; border-bottom: 0; }
.chartpane { width: 963px; margin-left: 4px; background: #fff; border-left: 2px solid #9a9a9a; border-right: 2px solid #d4d4d4; border-bottom: 1px solid #d4d4d4; display: flex; flex-direction: column; flex: none; }

.filters { display: flex; gap: 41px; margin: 2px 0 0 143px; height: 29px; flex: none; }
.pill { width: 110px; height: 29px; border-radius: 4px; background: linear-gradient(#b4b4b4, #333 50%, #8e8e8e); padding: 5px 6px 6px 7px; flex: none; }
.pill-in { height: 18px; background: linear-gradient(#f7f7f7, #e8e8e8); display: flex; align-items: center; justify-content: space-between; padding: 1px 6px 0 5px; font: 12px "Liberation Sans", sans-serif; color: #444; }
.chev { width: 9px; height: 5px; display: block; flex: none; }

.axis-select { display: flex; align-items: flex-start; gap: 1px; height: 23px; flex: none; }
.axis-rows { margin: 4px 0 0 12px; }
.axis-cols { margin: 5px 0 0 816px; }
.handle { width: 18px; height: 23px; flex: none; background: repeating-linear-gradient(#373737 0 3px, #4a4a4a 3px 4px); }
.select { width: 121px; height: 21px; border: 1px solid #777; background: #fff; padding: 2px 5px 2px 2px; display: flex; align-items: center; justify-content: space-between; }
.sel-text { width: 98px; height: 15px; font: 11px/15px "Liberation Sans", sans-serif; letter-spacing: -.35px; color: #111; white-space: nowrap; }
.sel-peach { background: #fedab8; }
.sel-pink { background: #dc9fdb; width: 99px; }
.chev-dark { margin-right: 1px; }

.plot { display: block; flex: none; margin-top: 9px; }
.grid { fill: none; stroke: #000; stroke-width: 1; }
.s-net { fill: #e0830a; }
.s-ebit { fill: #526482; }
.s-ebitda { fill: #c96c4e; }
.s-cream { fill: #fee083; }
.s-navy { fill: #1a3a6b; }
.s-gray { fill: #c0c0c0; }
.s-teal { fill: #036a96; }
.s-red { fill: #e0400a; }
.s-blue { fill: #428bf0; }
.s-amber { fill: #fdb240; }
.s-opex { fill: #139de0; }
.t-title { font: 19.2px "Liberation Sans", sans-serif; fill: #000; }
.t-sub { font: 11px "Liberation Sans", sans-serif; fill: #111; }
.t-axis { font: 13px "Liberation Sans", sans-serif; fill: #111; }

.legend { display: flex; height: 42px; margin: 10px 0 0 109px; flex: none; font: 11.1px/14px "Liberation Sans", sans-serif; color: #111; }
.leg-col { display: flex; flex-direction: column; }
.col-1 { width: 111px; }
.col-2 { width: 128px; }
.col-3 { width: 187px; }
.col-4 { width: 175px; }
.leg { display: flex; align-items: center; height: 14px; white-space: nowrap; }
.sw { width: 22px; height: 9px; margin-right: 5px; flex: none; }
.s1 { background: #e0830a; } .s2 { background: #f4b8a8; } .s3 { background: #526482; }
.s4 { background: #f5d188; } .s5 { background: #0060e0; } .s6 { background: #c96c4e; }
.s7 { background: #139de0; } .s8 { background: #fee083; } .s9 { background: #1a3a6b; }
.s10 { background: #c0c0c0; } .s11 { background: #036a96; } .s12 { background: #e0400a; }
.s13 { background: #fdb240; } .s14 { background: #428bf0; }

.hscroll { height: 18px; margin: 5px 0 0 12px; background: #f0f0f0; display: flex; flex: none; }
.hs-btn { width: 17px; height: 18px; display: flex; align-items: center; justify-content: center; }
.hs-arrow { width: 6px; height: 10px; display: block; }
.hs-thumb { width: 518px; height: 18px; background: #cdcdcd; }

/* status bar */
.statusbar { height: 25px; flex: none; padding-top: 6px; background: linear-gradient(#f5f5f5 0 3px, #d8d8d8 3px 4px, #fff 4px 6px, #e1e1e1 6px 23px, #fff 23px); display: flex; justify-content: flex-end; }
.zoom { width: 65px; height: 17px; background: #f0f0f0; display: flex; align-items: center; padding-left: 5px; color: #222; font-size: 12px; }
.zoom .tri { margin-left: 10px; }
.sizegrip { width: 12px; height: 12px; margin-left: 4px; margin-top: 5px; display: block; }
```
